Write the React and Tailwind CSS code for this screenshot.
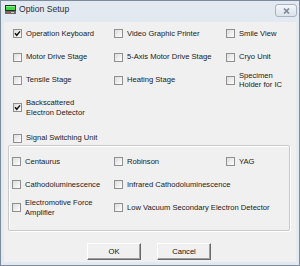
import React from 'react'

// Top section rows: [height, items[]]
const topRows = [
  { h: 'h-[23px]', items: [{ label: 'Operation Keyboard', checked: true }, { label: 'Video Graphic Printer' }, { label: 'Smile View' }] },
  { h: 'h-[24px]', items: [{ label: 'Motor Drive Stage' }, { label: '5-Axis Motor Drive Stage' }, { label: 'Cryo Unit' }] },
  { h: 'h-[22px]', items: [{ label: 'Tensile Stage' }, { label: 'Heating Stage' }, { label: ['Specimen', 'Holder for IC'] }] },
  { h: 'h-[33px]', items: [{ label: ['Backscattered', 'Electron Detector'], checked: true }] },
]

const groupRows = [
  [{ label: 'Centaurus' }, { label: 'Robinson' }, { label: 'YAG' }],
  [{ label: 'Cathodoluminescence' }, { label: 'Infrared Cathodoluminescence' }],
  [{ label: ['Electromotive Force', 'Amplifier'] }, { label: 'Low Vacuum Secondary Electron Detector' }],
]

function Check({ label, checked }) {
  const lines = Array.isArray(label) ? label : [label]
  return (
    <div className="flex items-center gap-[4px] whitespace-nowrap">
      <span className="w-[9px] h-[9px] shrink-0 border border-[#8e8f8f] bg-gradient-to-br from-[#dcdcdc] to-white flex items-center justify-center">
        {checked && (
          <svg width="7" height="7" viewBox="0 0 7 7">
            <path d="M1 3.2 L2.8 5.3 L6 1.4" fill="none" stroke="#111" strokeWidth="1.4" />
          </svg>
        )}
      </span>
      <span className="leading-[9.5px]">
        {lines.map((l) => (
          <span key={l} className="block">{l}</span>
        ))}
      </span>
    </div>
  )
}

function Button({ children }) {
  return (
    <button className="w-[54px] h-[17px] bg-[#f0f0f0] border border-t-white border-l-white border-r-[#696969] border-b-[#696969] shadow-[inset_-1px_-1px_0_#a0a0a0] text-[7.6px] text-[#111] leading-none">
      {children}
    </button>
  )
}

export default function App() {
  return (
    <div className="w-[300px] h-[266px] bg-[#e3e9f0] border border-[#7d8a9c] flex flex-col font-['Liberation_Sans',Arial,sans-serif] text-[7.6px] text-[#1a1a1a]">
      {/* Title bar */}
      <div className="h-[21px] shrink-0 flex items-start">
        <svg className="ml-[4px] mt-[4px]" width="11" height="9" viewBox="0 0 11 9">
          <rect x="0" y="0" width="11" height="6" fill="#2b2b2b" />
          <rect x="1" y="1" width="9" height="4" fill="#3ddc3d" />
          <rect x="1" y="1" width="9" height="1" fill="#8ff08f" />
          <rect x="0" y="6" width="11" height="3" fill="#6e6a6a" />
          <rect x="2" y="7" width="2" height="1" fill="#d24a4a" />
          <rect x="6" y="7" width="3" height="1" fill="#c8c8c8" />
        </svg>
        <span className="ml-[3px] mt-[4px] text-[8.6px] text-[#2a2f36] leading-none">Option Setup</span>
        <div className="ml-auto mr-[2px] mt-[3px] w-[22px] h-[13px] rounded-[3px] border border-[#a7b3c3] bg-gradient-to-b from-[#f4f6f9] to-[#dce3eb] flex items-center justify-center">
          <svg width="7" height="6" viewBox="0 0 7 6">
            <path d="M1 0.5 L6 5.5 M6 0.5 L1 5.5" stroke="#7c8898" strokeWidth="1.6" />
          </svg>
        </div>
      </div>

      {/* Client area */}
      <div className="flex-1 mx-[3px] mb-[3px] bg-[#f0f0f0] flex flex-col">
        <div className="pl-[9px]">
          {topRows.map((row, i) => (
            <div key={i} className={`${row.h} grid grid-cols-[101px_112px_1fr] items-center`}>
              {row.items.map((it, j) => (
                <Check key={j} {...it} />
              ))}
            </div>
          ))}
          <div className="mt-[7px] h-[14px] flex items-center">
            <Check label="Signal Switching Unit" />
          </div>
        </div>

        {/* Group box */}
        <div className="ml-[4px] mr-[6px] h-[86px] border border-[#cacaca] rounded-[2px] shadow-[inset_1px_1px_0_#fff,1px_1px_0_#fff] pl-[3px] pt-[4px]">
          {groupRows.map((row, i) => (
            <div key={i} className="h-[23px] grid grid-cols-[102px_112px_1fr] items-center">
              {row.map((it, j) => (
                <Check key={j} {...it} />
              ))}
            </div>
          ))}
        </div>

        {/* Buttons */}
        <div className="mt-[12px] flex justify-center gap-[16px] pr-[2px]">
          <Button>OK</Button>
          <Button>Cancel</Button>
        </div>
      </div>
    </div>
  )
}
